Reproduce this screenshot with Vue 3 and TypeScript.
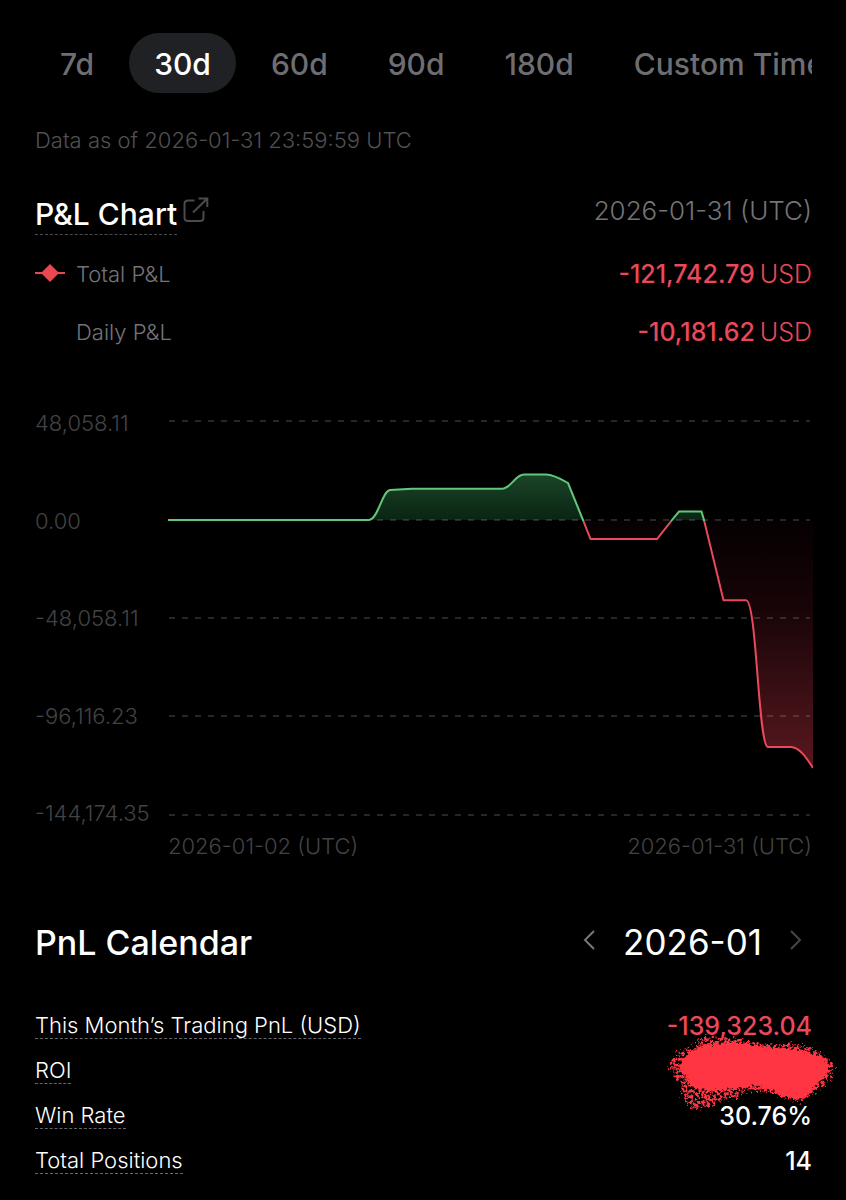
<script setup lang="ts">
import { ref } from 'vue'

interface Stat {
  label: string
  value: string
  loss?: boolean
}

const ranges: string[] = ['7d', '30d', '60d', '90d', '180d', 'Custom Time']
const selected = ref<string>('30d')
const axisLabels: string[] = ['48,058.11', '0.00', '-48,058.11', '-96,116.23', '-144,174.35']
const gridLines: number[] = [11, 110, 208, 306, 405]

const stats: Stat[] = [
  { label: 'This Month’s Trading PnL (USD)', value: '-139,323.04', loss: true },
  { label: 'ROI', value: '' },
  { label: 'Win Rate', value: '30.76%' },
  { label: 'Total Positions', value: '14' },
]

const curve =
  'M0 110H201C210 110 214 81 222 80L244 78.7H334C343 78.7 347 64.6 356 64.6H378C385 64.6 393 69 400 73L415 110L422.500 129H489L504 110L511 101.500H533.500L536 110L555.500 190.300H578C589 190.300 590 337 600 337H623C631 337 638 347 645 358'
const area = curve + 'V110H0Z'
</script>

<template>
  <main class="page">
    <nav class="tabs" aria-label="Time range">
      <button
        v-for="range in ranges"
        :key="range"
        type="button"
        class="tab"
        :class="{ active: range === selected }"
        :aria-pressed="range === selected"
        @click="selected = range"
      >{{ range }}</button>
    </nav>

    <p class="as-of">Data as of 2026-01-31 23:59:59 UTC</p>

    <section>
      <header class="chart-head">
        <div class="chart-title">
          <h2>P&amp;L Chart</h2>
          <button type="button" class="icon-button open" aria-label="Open chart">
            <svg width="26" height="26" viewBox="0 0 26 26" fill="none" stroke="#4b4b4e" stroke-width="2">
              <path d="M11.500 3.500H5Q1.500 3.500 1.500 7V20.500Q1.500 24 5 24H17Q20.500 24 20.500 20.500V14" />
              <path d="M10 15.500L24 1.800M15.500 1.500H24.300V10" />
            </svg>
          </button>
        </div>
        <time class="chart-date">2026-01-31 (UTC)</time>
      </header>

      <div class="legend">
        <div class="legend-row">
          <svg class="marker" width="30" height="18" viewBox="0 0 30 18" fill="#e8484f">
            <path d="M0 7H7L15 -1L23 7H30V9H23L15 17L7 9H0Z" />
          </svg>
          <span class="legend-name">Total P&amp;L</span>
          <span class="amount">-121,742.79 <span class="unit">USD</span></span>
        </div>
        <div class="legend-row">
          <span class="marker"></span>
          <span class="legend-name">Daily P&amp;L</span>
          <span class="amount">-10,181.62 <span class="unit">USD</span></span>
        </div>
      </div>

      <div class="chart">
        <div class="y-axis">
          <span v-for="label in axisLabels" :key="label">{{ label }}</span>
        </div>
        <svg class="plot" viewBox="0 0 644 410" preserveAspectRatio="none" role="img" aria-label="Total profit and loss">
          <defs>
            <linearGradient id="gain" gradientUnits="userSpaceOnUse" x1="0" y1="64" x2="0" y2="110">
              <stop offset="0" stop-color="#1a4527" />
              <stop offset="1" stop-color="#0a2414" />
            </linearGradient>
            <linearGradient id="loss" gradientUnits="userSpaceOnUse" x1="0" y1="110" x2="0" y2="358">
              <stop offset="0" stop-color="#050001" />
              <stop offset="0.35" stop-color="#170407" />
              <stop offset="1" stop-color="#58181f" />
            </linearGradient>
            <clipPath id="above-area"><rect x="0" y="0" width="644" height="110" /></clipPath>
            <clipPath id="above"><rect x="0" y="0" width="645" height="111" /></clipPath>
            <clipPath id="below"><rect x="0" y="111" width="645" height="299" /></clipPath>
          </defs>
          <path :d="area" fill="url(#gain)" clip-path="url(#above-area)" />
          <path :d="area" fill="url(#loss)" clip-path="url(#below)" />
          <line v-for="y in gridLines" :key="y" class="grid-line" x1="1" x2="642" :y1="y" :y2="y" />
          <path :d="curve" class="curve gain" clip-path="url(#above)" />
          <path :d="curve" class="curve fall" clip-path="url(#below)" />
        </svg>
        <div class="x-axis">
          <span>2026-01-02 (UTC)</span>
          <span>2026-01-31 (UTC)</span>
        </div>
      </div>
    </section>

    <section>
      <header class="calendar-head">
        <h2>PnL Calendar</h2>
        <div class="month">
          <button type="button" class="icon-button step" aria-label="Previous month">
            <svg width="12" height="20" viewBox="0 0 12 20" fill="none" stroke="#77777a" stroke-width="2">
              <path d="M11 1L2 10L11 19" />
            </svg>
          </button>
          <time>2026-01</time>
          <button type="button" class="icon-button step" aria-label="Next month">
            <svg width="12" height="20" viewBox="0 0 12 20" fill="none" stroke="#464649" stroke-width="2">
              <path d="M1 1L10 10L1 19" />
            </svg>
          </button>
        </div>
      </header>

      <dl class="stats">
        <div v-for="stat in stats" :key="stat.label" class="stat">
          <dt>{{ stat.label }}</dt>
          <dd :class="{ loss: stat.loss }">
            {{ stat.value }}
            <svg v-if="!stat.value" class="scribble" width="176" height="84" viewBox="0 0 176 84" aria-label="Hidden value">
              <defs>
                <filter id="rough" x="-10%" y="-20%" width="120%" height="140%">
                  <feTurbulence type="fractalNoise" baseFrequency="0.25" numOctaves="3" seed="8" />
                  <feDisplacementMap in="SourceGraphic" scale="10" xChannelSelector="R" yChannelSelector="G" />
                  <feGaussianBlur stdDeviation="0.6" />
                </filter>
                <filter id="spray" x="-10%" y="-10%" width="120%" height="120%">
                  <feTurbulence type="fractalNoise" baseFrequency="0.35" numOctaves="3" seed="4" result="noise" />
                  <feDisplacementMap in="SourceGraphic" in2="noise" scale="12" xChannelSelector="R" yChannelSelector="G" result="edge" />
                  <feColorMatrix in="noise" type="matrix" values="0 0 0 0 0  0 0 0 0 0  0 0 0 0 0  0 0 6 0 -2.500" result="holes" />
                  <feComposite in="edge" in2="holes" operator="in" />
                  <feGaussianBlur stdDeviation="0.4" />
                </filter>
              </defs>
              <g fill="#ff3543">
                <path filter="url(#spray)" d="M6 34L16 18L32 14L38 5L68 4L100 12L140 11L154 18L166 24L174 34L168 48L152 60L140 69L110 60L84 58L78 64L56 68L48 74L32 77L20 64L18 50Z" />
                <path filter="url(#rough)" d="M18 35C20 22 34 15 46 12C62 7 82 10 102 14C122 16 136 14 150 20C162 24 168 30 166 38C161 48 154 52 146 62Q136 68 126 64C112 60 106 54 94 53C72 54 60 58 46 58C32 57 24 46 18 35Z" />
                <path d="M28 34C36 20 50 15 66 13C86 11 104 17 126 18C144 19 155 28 152 38C150 49 143 58 137 63C122 59 112 51 94 51C70 52 52 57 38 51Q31 44 28 34Z" />
              </g>
            </svg>
          </dd>
        </div>
      </dl>
    </section>
  </main>
</template>

<style>
body {
  margin: 0;
  background: #000;
}
</style>

<style scoped>
.page {
  box-sizing: border-box;
  min-height: 100vh;
  padding: 33px 34px 16px 35px;
  overflow: hidden;
  background: #000;
  color: #fff;
  font-family: Inter, "Liberation Sans", sans-serif;
  font-size: 22px;
  font-weight: 300;
}

h2,
p,
dl,
dd {
  margin: 0;
}

h2 {
  font-weight: 500;
}

.tabs {
  display: flex;
  gap: 10px;
  overflow: hidden;
}

.tab {
  flex: none;
  height: 60px;
  padding: 2px 25px 0;
  border: 0;
  border-radius: 30px;
  background: transparent;
  color: #6e6e72;
  font: 500 30px Inter, "Liberation Sans", sans-serif;
  white-space: nowrap;
}

.tab.active {
  background: #202125;
  color: #fff;
}

.as-of {
  margin-top: 32px;
  color: #505053;
  line-height: 30px;
}

.chart-head {
  display: flex;
  align-items: flex-start;
  justify-content: space-between;
  margin-top: 41px;
}

.chart-title {
  display: flex;
  align-items: flex-start;
  gap: 6px;
}

.chart-title h2 {
  padding-bottom: 2px;
  border-bottom: 1px dashed #4b4b4e;
  font-size: 30px;
  line-height: 36px;
}

.icon-button {
  display: flex;
  padding: 0;
  border: 0;
  background: transparent;
}

.open {
  margin-top: 1px;
}

.step {
  padding-bottom: 4px;
}

.chart-date {
  color: #747478;
  font-size: 26px;
  line-height: 30px;
}

.legend {
  margin-top: 10px;
}

.legend-row {
  display: flex;
  align-items: center;
  height: 58px;
}

.marker {
  width: 30px;
  margin-right: 11px;
  overflow: visible;
}

.legend-name {
  flex: 1;
  color: #747478;
}

.amount {
  display: flex;
  gap: 5px;
  color: #e9495a;
  font-size: 25px;
  font-weight: 500;
}

.unit {
  font-weight: 300;
}

.chart {
  display: grid;
  grid-template-columns: 133px 1fr;
  row-gap: 11px;
  margin-top: 47px;
}

.y-axis {
  display: flex;
  flex-direction: column;
  justify-content: space-between;
  height: 420px;
  margin-bottom: -8px;
  color: #434346;
  line-height: 30px;
}

.plot {
  width: 100%;
  height: 410px;
  margin-top: 2px;
  overflow: visible;
}

.grid-line {
  stroke: #8c8c98;
  stroke-opacity: 0.28;
  stroke-width: 2;
  stroke-dasharray: 6 7;
}

.curve {
  fill: none;
  stroke-width: 2;
  vector-effect: non-scaling-stroke;
}

.gain {
  stroke: #62c77b;
}

.fall {
  stroke: #e9495a;
}

.x-axis {
  display: flex;
  grid-column: 2;
  justify-content: space-between;
  color: #434346;
  line-height: 30px;
}

.calendar-head {
  display: flex;
  align-items: center;
  justify-content: space-between;
  height: 48px;
  margin-top: 57px;
}

.calendar-head h2 {
  font-size: 34px;
}

.month {
  display: flex;
  align-items: center;
  gap: 28px;
  padding-right: 10px;
  font-size: 35px;
  font-weight: 400;
}

.stats {
  margin-top: 37px;
}

.stat {
  display: flex;
  align-items: center;
  justify-content: space-between;
  height: 45px;
}

dt {
  border-bottom: 1px dashed #66666a;
  line-height: 26px;
}

dd {
  position: relative;
  font-size: 25px;
  font-weight: 500;
}

.loss {
  color: #e9495a;
}

.scribble {
  position: absolute;
  top: -38px;
  right: -26px;
}
</style>
